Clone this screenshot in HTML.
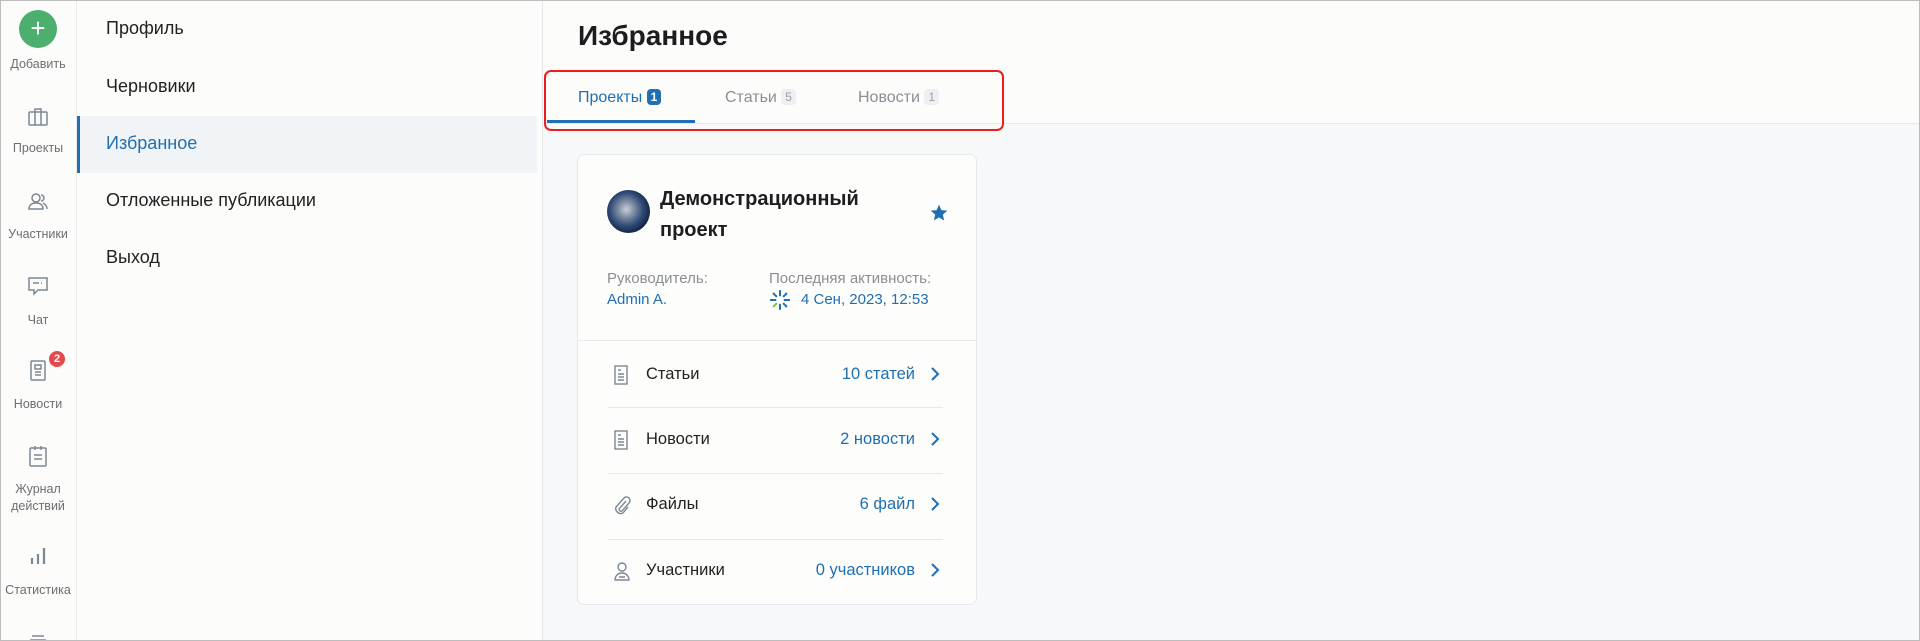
<!DOCTYPE html>
<html><head><meta charset="utf-8">
<style>
*{margin:0;padding:0;box-sizing:border-box}
html{width:1920px;height:641px;overflow:hidden}
body{width:1920px;height:641px;overflow:hidden;font-family:"Liberation Sans","DejaVu Sans",sans-serif;background:#f7f8f9;position:relative;color:#222}
.abs{position:absolute}
#frame{position:absolute;left:0;top:0;width:1920px;height:641px;border:1px solid #bdbdbd;pointer-events:none;z-index:10}
#rail{left:0;top:0;width:77px;height:641px;background:#fcfcfb;border-right:1px solid #ececec}
.rl{position:absolute;left:0;width:76px;text-align:center;font-size:12.5px;color:#6b6f73}
.ri{position:absolute;left:26px;width:24px;height:24px}
#menu{left:77px;top:0;width:466px;height:641px;background:#fcfcfb;border-right:1px solid #e3e5e8}
.mi{position:absolute;left:29px;font-size:18px;color:#222}
#head{left:543px;top:0;width:1377px;height:124px;background:#fcfcfb;border-bottom:1px solid #e6e8eb}
.card{left:577px;top:154px;width:400px;height:451px;background:#fdfdfc;border:1px solid #e6e8eb;border-radius:7px}
.row{position:absolute;left:30px;width:335px;height:66px;font-size:16.5px}
.row .lb{position:absolute;left:38px;top:22px;color:#222}
.row .vl{position:absolute;right:28px;top:22px;color:#1f6fb2}
.row .ch{position:absolute;right:2px;top:21px}
.row .ic{position:absolute;left:5px;top:22px}
.sep{position:absolute;left:30px;width:335px;height:1px;background:#e8e9eb}
</style></head><body>
<div id="frame"></div>

<div id="rail" class="abs">
  <div class="abs" style="left:19px;top:10px;width:38px;height:38px;border-radius:50%;background:#4caf6e;color:#fff;font-size:26px;line-height:36px;text-align:center">+</div>
  <div class="rl" style="top:57px">Добавить</div>
  <svg class="ri" style="top:105px" viewBox="0 0 24 24" fill="none" stroke="#7d8893" stroke-width="1.5"><rect x="3" y="7" width="18" height="13" rx="1"/><path d="M9 7V4h6v3M9 7v13M15 7v13"/></svg>
  <div class="rl" style="top:141px">Проекты</div>
  <svg class="ri" style="top:190px" viewBox="0 0 24 24" fill="none" stroke="#7d8893" stroke-width="1.5"><circle cx="10" cy="8" r="4"/><path d="M3 19c0-4 3-6 7-6s7 2 7 6zM15 5a3 3 0 010 6M17 13c2 1 4 3 4 6"/></svg>
  <div class="rl" style="top:227px">Участники</div>
  <svg class="ri" style="top:274px" viewBox="0 0 24 24" fill="none" stroke="#7d8893" stroke-width="1.5"><path d="M3 4h18v12h-9l-4 4v-4H3z"/><path d="M7 9h6M15 9h1"/></svg>
  <div class="rl" style="top:313px">Чат</div>
  <svg class="ri" style="top:358px" viewBox="0 0 24 24" fill="none" stroke="#7d8893" stroke-width="1.5"><rect x="5" y="3" width="14" height="19" rx="1"/><rect x="9" y="7" width="6" height="4"/><path d="M9 14h6M9 17h6"/></svg>
  <div class="abs" style="left:49px;top:351px;width:16px;height:16px;border-radius:50%;background:#e5484d;color:#fff;font-size:11px;line-height:16px;text-align:center;font-weight:bold">2</div>
  <div class="rl" style="top:397px">Новости</div>
  <svg class="ri" style="top:444px" viewBox="0 0 24 24" fill="none" stroke="#7d8893" stroke-width="1.5"><rect x="4" y="4" width="16" height="18" rx="1"/><path d="M9 2v4M15 2v4M8 11h8M8 15h8"/></svg>
  <div class="rl" style="top:482px">Журнал</div>
  <div class="rl" style="top:499px">действий</div>
  <svg class="ri" style="top:544px" viewBox="0 0 24 24" fill="none" stroke="#7d8893" stroke-width="2.2"><path d="M6 20v-6M12 20v-10M18 20V4"/></svg>
  <div class="rl" style="top:583px">Статистика</div>
  <svg class="ri" style="top:632px" viewBox="0 0 24 24" fill="none" stroke="#7d8893" stroke-width="1.5"><path d="M6 4h12M4 8h16"/></svg>
</div>

<div id="menu" class="abs">
  <div class="mi" style="top:18px">Профиль</div>
  <div class="mi" style="top:76px">Черновики</div>
  <div class="abs" style="left:0;top:116px;width:460px;height:57px;background:#f0f4f7;border-left:3px solid #1f6fb2"></div>
  <div class="mi" style="top:133px;color:#1f6fb2">Избранное</div>
  <div class="mi" style="top:190px">Отложенные публикации</div>
  <div class="mi" style="top:247px">Выход</div>
</div>

<div id="head" class="abs">
  <div class="abs" style="left:35px;top:20px;font-size:28px;font-weight:bold;color:#1d1d1f">Избранное</div>
  <div class="abs" style="left:35px;top:89px;font-size:16px;color:#1f6fb2">Проекты <span style="display:inline-block;background:#1f6fb2;color:#fff;border-radius:4px;font-size:12px;padding:0 4px;line-height:16px;font-weight:bold;vertical-align:1px">1</span></div>
  <div class="abs" style="left:4px;top:120px;width:148px;height:3px;background:#1f6fb2"></div>
  <div class="abs" style="left:182px;top:89px;font-size:16px;color:#8a8f94">Статьи <span style="display:inline-block;background:#edeff1;color:#9aa0a6;border-radius:4px;font-size:12px;padding:0 4px;line-height:16px;vertical-align:1px">5</span></div>
  <div class="abs" style="left:315px;top:89px;font-size:16px;color:#8a8f94">Новости <span style="display:inline-block;background:#edeff1;color:#9aa0a6;border-radius:4px;font-size:12px;padding:0 4px;line-height:16px;vertical-align:1px">1</span></div>
  <div class="abs" style="left:1px;top:70px;width:460px;height:61px;border:2px solid #ee1c1c;border-radius:7px"></div>
</div>

<div class="card abs">
  <div class="abs" style="left:29px;top:35px;width:43px;height:43px;border-radius:50%;background:radial-gradient(circle at 45% 45%,#c9cfd8 0,#7b8aa0 25%,#2f4a78 50%,#15243f 72%,#050608 85%)"></div>
  <div class="abs" style="left:82px;top:29px;font-size:20px;font-weight:bold;line-height:31px;color:#1d1d1f">Демонстрационный<br>проект</div>
  <svg class="abs" style="left:351px;top:48px" width="20" height="20" viewBox="0 0 24 24"><path fill="#1f6fb2" d="M12 2l2.9 6.6 7.1.6-5.4 4.7 1.6 7.1L12 17.3 5.8 21l1.6-7.1L2 9.2l7.1-.6z"/></svg>
  <div class="abs" style="left:29px;top:115px;font-size:15px;color:#8a8f94">Руководитель:</div>
  <div class="abs" style="left:29px;top:136px;font-size:15px;color:#1f6fb2">Admin A.</div>
  <div class="abs" style="left:191px;top:115px;font-size:15px;color:#8a8f94">Последняя активность:</div>
  <svg class="abs" style="left:191px;top:134px" width="22" height="22" viewBox="0 0 24 24" stroke-width="2.2" stroke-linecap="round"><path stroke="#1f6fb2" d="M12 2v5M12 17v5M2 12h5M17 12h5M5 5l3 3M16 16l3 3M19 5l-3 3"/><path stroke="#7cc142" d="M5 19l3-3"/></svg>
  <div class="abs" style="left:223px;top:136px;font-size:15px;color:#1f6fb2">4 Сен, 2023, 12:53</div>
  <div class="abs" style="left:0;top:185px;width:398px;height:1px;background:#e8e9eb"></div>

  <div class="row" style="top:188px">
    <svg class="ic" width="16" height="20" viewBox="0 0 16 20" fill="none" stroke="#7d8893" stroke-width="1.4"><rect x="2" y="1" width="12" height="18"/><path d="M5 5h3M5 9h6M5 12h6M5 15h6"/></svg>
    <div class="lb">Статьи</div><div class="vl">10 статей</div>
    <svg class="ch" width="12" height="20" viewBox="0 0 12 20" fill="none" stroke="#1f6fb2" stroke-width="2"><path d="M3 4l6 6-6 6"/></svg>
  </div>
  <div class="sep" style="top:252px"></div>
  <div class="row" style="top:253px">
    <svg class="ic" width="16" height="20" viewBox="0 0 16 20" fill="none" stroke="#7d8893" stroke-width="1.4"><rect x="2" y="1" width="12" height="18"/><path d="M5 5h3M5 9h6M5 12h6M5 15h6"/></svg>
    <div class="lb">Новости</div><div class="vl">2 новости</div>
    <svg class="ch" width="12" height="20" viewBox="0 0 12 20" fill="none" stroke="#1f6fb2" stroke-width="2"><path d="M3 4l6 6-6 6"/></svg>
  </div>
  <div class="sep" style="top:318px"></div>
  <div class="row" style="top:318px">
    <svg class="ic" width="18" height="20" viewBox="0 0 18 20" fill="none" stroke="#7d8893" stroke-width="1.4"><path d="M13 6l-7 8a2 2 0 003 2l7-8a3.5 3.5 0 00-5-5L3 12a5 5 0 007 6l5-6"/></svg>
    <div class="lb">Файлы</div><div class="vl">6 файл</div>
    <svg class="ch" width="12" height="20" viewBox="0 0 12 20" fill="none" stroke="#1f6fb2" stroke-width="2"><path d="M3 4l6 6-6 6"/></svg>
  </div>
  <div class="sep" style="top:384px"></div>
  <div class="row" style="top:384px">
    <svg class="ic" width="18" height="20" viewBox="0 0 18 20" fill="none" stroke="#7d8893" stroke-width="1.4"><circle cx="9" cy="6" r="4"/><path d="M2 19c0-4 3-7 7-7s7 3 7 7zM6 16h6"/></svg>
    <div class="lb">Участники</div><div class="vl">0 участников</div>
    <svg class="ch" width="12" height="20" viewBox="0 0 12 20" fill="none" stroke="#1f6fb2" stroke-width="2"><path d="M3 4l6 6-6 6"/></svg>
  </div>
</div>
</body></html>
